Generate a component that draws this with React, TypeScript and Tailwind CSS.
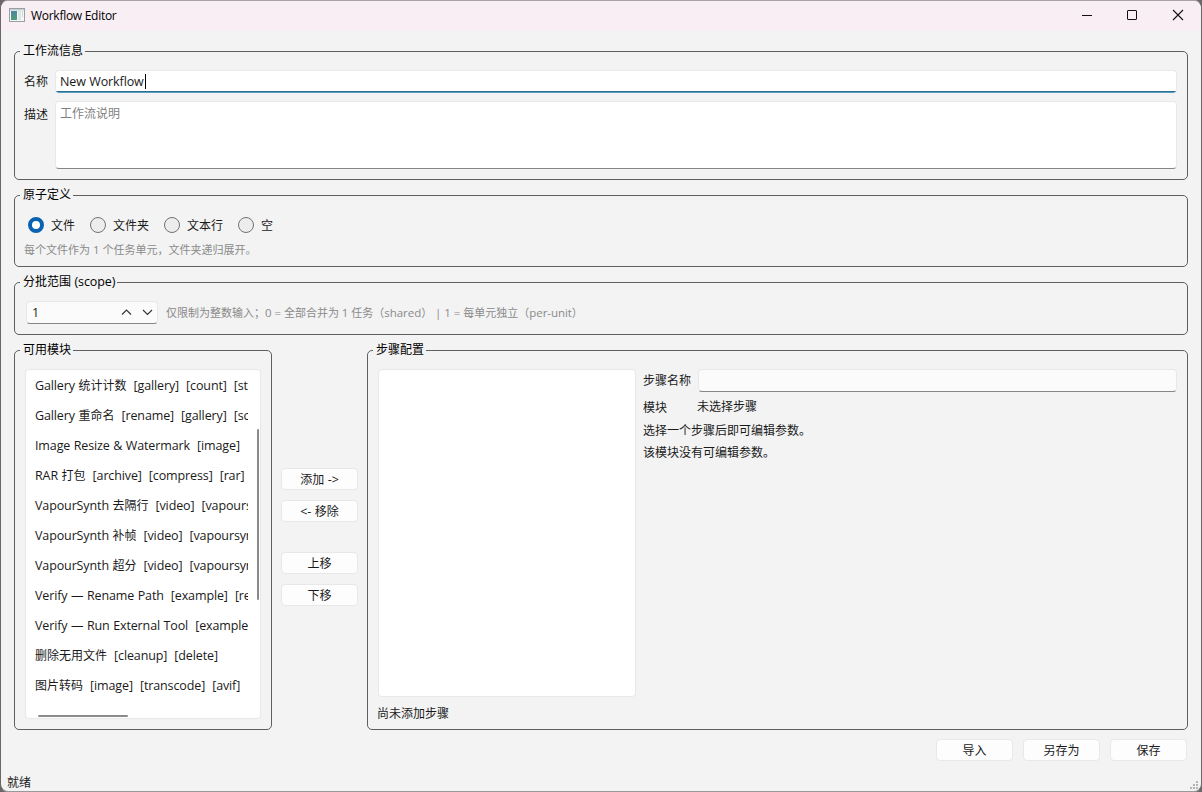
import type { ReactNode } from 'react';

const CJK_RUN = /([\u3000-\u9fff\uff00-\uffef]+)/;

/** Mixed text: CJK glyphs keep the base size, Latin runs are set a little larger. */
function T({ children, small = false }: { children: string; small?: boolean }) {
  return (
    <>
      {children.split(CJK_RUN).map((run, i) =>
        i % 2 === 1 ? (
          <span key={i}>{run}</span>
        ) : (
          <span
            key={i}
            className={small ? 'text-[11.5px] tracking-[-0.05px]' : 'text-[12.5px] tracking-[-0.12px] [word-spacing:0.4px]'}
          >
            {run}
          </span>
        ),
      )}
    </>
  );
}

function Group({ title, className, children }: { title: string; className: string; children: ReactNode }) {
  return (
    <fieldset className={`min-w-0 rounded-[5px] border border-[#5f5f5f] ${className}`}>
      <legend className="ml-[5px] h-[17px] pr-[2px] pl-[3px] leading-[15px] text-black">
        <T>{title}</T>
      </legend>
      {children}
    </fieldset>
  );
}

function Button({ children, className = '' }: { children: string; className?: string }) {
  return (
    <button
      className={`h-[22px] w-[77px] shrink-0 rounded-[4px] border border-[#e8e8e8] bg-[#fdfdfd] pt-[2px] text-center leading-[18px] ${className}`}
    >
      <T>{children}</T>
    </button>
  );
}

function Radio({ label, checked = false }: { label: string; checked?: boolean }) {
  return (
    <label className="flex h-4 items-center gap-[7px]">
      <span
        className={
          checked
            ? 'size-4 rounded-full border-4 border-[#0a63b1] bg-white'
            : 'size-4 rounded-full border border-[#727272] bg-[#ededed]'
        }
      />
      <span className="pt-[2px] leading-4">{label}</span>
    </label>
  );
}

const modules = [
  'Gallery 统计计数  [gallery]  [count]  [stats]',
  'Gallery 重命名  [rename]  [gallery]  [scope]',
  'Image Resize & Watermark  [image]',
  'RAR 打包  [archive]  [compress]  [rar]',
  'VapourSynth 去隔行  [video]  [vapoursynth]',
  'VapourSynth 补帧  [video]  [vapoursynth]',
  'VapourSynth 超分  [video]  [vapoursynth]',
  'Verify — Rename Path  [example]  [rename]',
  'Verify — Run External Tool  [example]',
  '删除无用文件  [cleanup]  [delete]',
  '图片转码  [image]  [transcode]  [avif]',
];

function TitleBar() {
  return (
    <header className="flex h-[30px] shrink-0 items-center bg-[#f9eef3] pl-2 text-black">
      <svg width="16" height="14" viewBox="0 0 16 14" className="mb-[2px] shrink-0">
        <defs>
          <linearGradient id="pane" x1="0" y1="0" x2="0" y2="1">
            <stop offset="0" stopColor="#4f86a0" />
            <stop offset="1" stopColor="#4d9c78" />
          </linearGradient>
        </defs>
        <rect x="0.5" y="0.5" width="15" height="13" fill="#f5f7f7" stroke="#9b9fa3" />
        <rect x="1" y="1" width="14" height="1.5" fill="#c5ced3" />
        <rect x="2" y="3" width="6" height="9" fill="url(#pane)" />
        <rect x="9" y="3" width="3" height="9" fill="#dce4e4" />
        <rect x="13" y="3" width="1" height="6" fill="#c9dcd6" />
      </svg>
      <span className="ml-[6px] text-[12px] tracking-[-0.28px]">Workflow Editor</span>
      <div className="mb-[2px] ml-auto flex">
        <svg width="12" height="12" className="mr-[33px]">
          <path d="M1 6.5H11" stroke="#111" />
        </svg>
        <svg width="12" height="12" className="mr-[34px]">
          <rect x="1.5" y="1.5" width="9" height="9" rx="0.5" fill="none" stroke="#111" />
        </svg>
        <svg width="12" height="12" className="mr-[17px]">
          <path d="M1 1L11 11M11 1L1 11" stroke="#111" strokeWidth="1.1" />
        </svg>
      </div>
    </header>
  );
}

export default function App() {
  return (
    <div className="h-[792px] w-[1202px] overflow-hidden bg-[#6c6669] font-['Open_Sans','Noto_Sans_CJK_SC',sans-serif] text-[12px] text-[#1a1a1a]">
      <div className="flex h-full flex-col overflow-hidden rounded-[8px] border border-t-[#aaa3a6] border-r-[#6f6668] border-b-[#999] border-l-[#6c6669] bg-[#f3f3f3]">
        <TitleBar />
        <main className="flex flex-1 flex-col pt-3 pr-[13px] pl-[13px]">
          <Group title="工作流信息" className="h-[137px] shrink-0">
            <div className="flex flex-col gap-2 pt-[10px] pr-[10px] pl-[9px]">
              <div className="flex h-[23px] items-center">
                <span className="w-[31px] shrink-0 pt-px">名称</span>
                <div className="relative flex h-full flex-1 items-center overflow-hidden rounded-[4px] border border-[#e8e8e8] border-b-0 bg-white pl-1">
                  <T>New Workflow</T>
                  <span className="mb-px ml-px h-[15px] w-px bg-black" />
                  <span className="absolute inset-x-0 bottom-0 h-[2px] border-t border-[#2b6e90] bg-[#5a9ec2]" />
                </div>
              </div>
              <div className="flex h-[68px]">
                <span className="mt-[5px] w-[31px] shrink-0">描述</span>
                <div className="flex-1 rounded-[4px] border border-[#e8e8e8] border-b-[#868686] bg-white pt-[3px] pl-1 text-[#808080]">
                  工作流说明
                </div>
              </div>
            </div>
          </Group>

          <Group title="原子定义" className="mt-[7px] h-[80px] shrink-0">
            <div className="flex gap-[15px] pt-[13px] pl-[13px]">
              <Radio label="文件" checked />
              <Radio label="文件夹" />
              <Radio label="文本行" />
              <Radio label="空" />
            </div>
            <p className="mt-[9px] pl-[9px] text-[11px] leading-4 text-[#8a8a8a]">
              <T small>每个文件作为 1 个任务单元，文件夹递归展开。</T>
            </p>
          </Group>

          <Group title="分批范围 (scope)" className="mt-[7px] h-[61px] shrink-0">
            <div className="flex items-center pt-[10px] pl-[11px]">
              <div className="flex h-[23px] w-[132px] items-center rounded-[4px] border border-[#e8e8e8] border-b-[#868686] bg-[#fbfbfb] pr-[4px] pl-[5px]">
                <span className="pt-px">
                  <T>1</T>
                </span>
                <svg width="32" height="8" className="mb-px ml-auto" fill="none" stroke="#333" strokeWidth="1.1">
                  <path d="M1 6.5L5.5 2L10 6.5M22 2L26.5 6.5L31 2" />
                </svg>
              </div>
              <p className="ml-2 text-[11px] whitespace-pre text-[#8a8a8a]">
                <T small>仅限制为整数输入；0 = 全部合并为 1 任务（shared） | 1 = 每单元独立（per-unit）</T>
              </p>
            </div>
          </Group>

          <div className="mt-[7px] flex h-[388px] shrink-0">
            <Group title="可用模块" className="h-full w-[258px] shrink-0">
              <div className="relative mt-[10px] ml-[10px] h-[350px] w-[236px] rounded-[4px] border border-[#e8e8e8] bg-white">
                <ul className="w-[222px] overflow-hidden pl-[9px]">
                  {modules.map((m) => (
                    <li key={m} className="h-[30px] leading-[32px] whitespace-pre">
                      <T>{m}</T>
                    </li>
                  ))}
                </ul>
                <span className="absolute top-[59px] right-px h-[171px] w-[2px] rounded-full bg-[#8a8a8a]" />
                <span className="absolute bottom-px left-[12px] h-[2px] w-[90px] rounded-full bg-[#8a8a8a]" />
              </div>
            </Group>

            <div className="ml-[9px] flex w-[77px] shrink-0 flex-col gap-[10px] pt-[126px]">
              <Button>{'添加 ->'}</Button>
              <Button>{'<- 移除'}</Button>
              <Button className="mt-5">上移</Button>
              <Button>下移</Button>
            </div>

            <Group title="步骤配置" className="ml-[9px] h-full flex-1">
              <div className="flex pt-[10px] pr-[10px] pl-[9px]">
                <div className="flex w-[266px] shrink-0 flex-col">
                  <div className="ml-px h-[328px] w-[258px] rounded-[4px] border border-[#e8e8e8] bg-white" />
                  <span className="mt-[9px] leading-4">尚未添加步骤</span>
                </div>
                <div className="flex flex-1 flex-col leading-4">
                  <div className="flex h-[23px] items-center">
                    <span className="w-[55px] shrink-0 pt-px">步骤名称</span>
                    <div className="h-full flex-1 rounded-[4px] border border-[#e8e8e8] border-b-[#868686] bg-[#fbfbfb]" />
                  </div>
                  <div className="mt-[7px] flex h-4">
                    <span className="mt-px w-[54px] shrink-0">模块</span>
                    <span>未选择步骤</span>
                  </div>
                  <p className="mt-[8px]">选择一个步骤后即可编辑参数。</p>
                  <p className="mt-[6px]">该模块没有可编辑参数。</p>
                </div>
              </div>
            </Group>
          </div>

          <div className="mt-[9px] flex shrink-0 justify-end gap-[10px] pr-px">
            <Button>导入</Button>
            <Button>另存为</Button>
            <Button>保存</Button>
          </div>
        </main>
        <footer className="flex h-[18px] shrink-0 items-end justify-between pr-[3px] pl-[6px]">
          <span className="leading-[16px]">就绪</span>
          <svg width="8" height="8" className="mb-[2px]" fill="#b5b5b5">
            <rect x="6" y="0" width="2" height="2" />
            <rect x="3" y="3" width="2" height="2" />
            <rect x="6" y="3" width="2" height="2" />
            <rect x="0" y="6" width="2" height="2" />
            <rect x="3" y="6" width="2" height="2" />
            <rect x="6" y="6" width="2" height="2" />
          </svg>
        </footer>
      </div>
    </div>
  );
}
